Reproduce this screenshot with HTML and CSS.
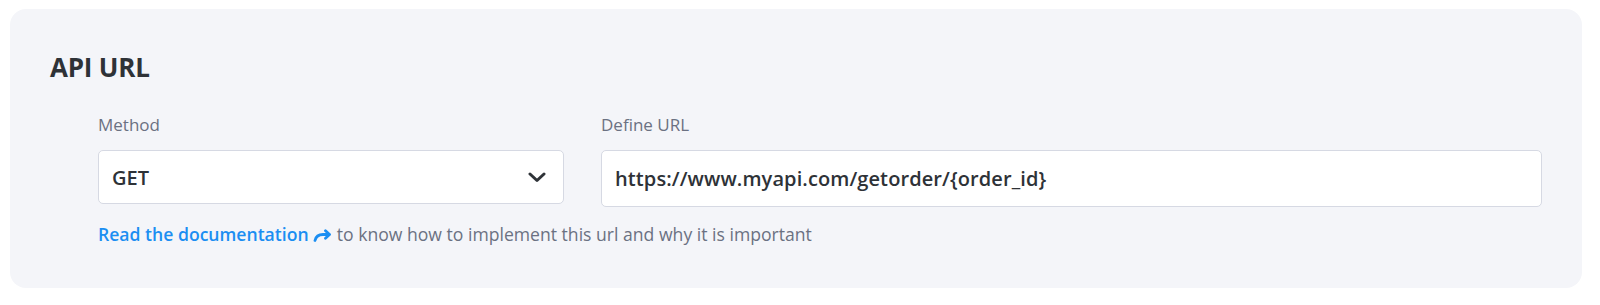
FILE: index.html
```html
<!DOCTYPE html>
<html lang="en">
<head>
<meta charset="utf-8">
<title>API URL</title>
<link rel="stylesheet" href="styles.css">
</head>
<body>
<section class="panel">
  <h2 class="title">API URL</h2>
  <div class="fields">
    <div class="grid">
      <div class="field">
        <label class="label">Method</label>
        <div class="control select">
          <span class="value">GET</span>
          <svg class="chevron" width="18" height="11" viewBox="0 0 18 11" aria-hidden="true">
            <path d="M2 2 L9 8.5 L16 2" fill="none" stroke="#2f3338" stroke-width="3" stroke-linecap="round" stroke-linejoin="round"/>
          </svg>
        </div>
      </div>
      <div class="field">
        <label class="label">Define URL</label>
        <div class="control input">
          <span class="value">https://www.myapi.com/getorder/{order_id}</span>
        </div>
      </div>
    </div>
    <p class="help"><a class="link" href="#">Read the documentation <svg class="arrow" width="19" height="13" viewBox="0 0 19 13" aria-hidden="true"><path d="M2 11.5 C3 7 6 5.5 10 5.5 L16 5.5" fill="none" stroke="#1b8ef2" stroke-width="2.8" stroke-linecap="round"/><path d="M12.5 1.8 L16.5 5.5 L12.5 9.2" fill="none" stroke="#1b8ef2" stroke-width="2.8" stroke-linecap="round" stroke-linejoin="round"/></svg></a> to know how to implement this url and why it is important</p>
  </div>
</section>
</body>
</html>
```

FILE: styles.css
```css
* { box-sizing: border-box; }

html, body {
  margin: 0;
  padding: 0;
  background: #ffffff;
}

body {
  font-family: "Open Sans", Lato, "Liberation Sans", sans-serif;
  color: #2e3237;
}

.panel {
  margin: 9px 18px 0 10px;
  height: 279px;
  background: #f4f5f9;
  border-radius: 16px;
  padding: 42px 40px 0 40px;
}

.title {
  margin: 0;
  font-size: 26px;
  line-height: 32px;
  font-weight: 700;
  color: #2e3237;
  letter-spacing: -0.2px;
}

.fields {
  margin: 31px 0 0 48px;
}

.grid {
  display: grid;
  grid-template-columns: 466px 1fr;
  column-gap: 37px;
}

.field {
  display: flex;
  flex-direction: column;
}

.label {
  font-size: 17px;
  line-height: 22px;
  color: #6b7182;
  margin-bottom: 14px;
}

.control {
  display: flex;
  align-items: center;
  background: #ffffff;
  border: 1px solid #d6d9e3;
  border-radius: 5px;
  padding: 0 14px 0 13px;
}

.select {
  height: 54px;
  justify-content: space-between;
}

.input {
  height: 57px;
}

.value {
  font-size: 20px;
  font-weight: 600;
  color: #2e3237;
  letter-spacing: 0.1px;
}

.chevron {
  display: block;
  margin-right: 3px;
}

.help {
  margin: 16px 0 0 0;
  font-size: 17.6px;
  line-height: 22px;
  color: #6b7182;
}

.link {
  color: #1b8ef2;
  text-decoration: none;
  font-weight: 600;
}

.arrow {
  display: inline-block;
  vertical-align: -1px;
}
```
